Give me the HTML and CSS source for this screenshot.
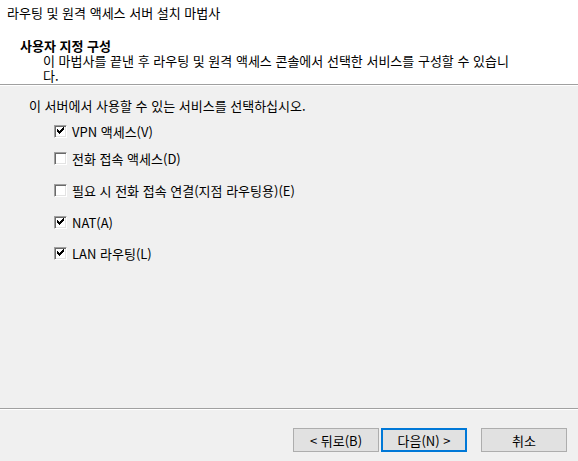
FILE: index.html
```html
<!DOCTYPE html>
<html lang="ko">
<head>
  <meta charset="UTF-8" />
  <title>라우팅 및 원격 액세스 서버 설치 마법사</title>
  <link rel="stylesheet" href="styles.css">
</head>
<body>

  <div class="header">
    <div class="title">라우팅 및 원격 액세스 서버 설치 마법사</div>
    <div class="heading">사용자 지정 구성</div>
    <div class="desc">이 마법사를 끝낸 후 라우팅 및 원격 액세스 콘솔에서 선택한 서비스를 구성할 수 있습니다.</div>
  </div>

  <div class="content">
    <p class="intro">이 서버에서 사용할 수 있는 서비스를 선택하십시오.</p>

    <div class="options">
      <label class="option"><span class="box checked"></span>VPN 액세스(V)</label>
      <label class="option"><span class="box"></span>전화 접속 액세스(D)</label>
      <label class="option"><span class="box"></span>필요 시 전화 접속 연결(지점 라우팅용)(E)</label>
      <label class="option"><span class="box checked"></span>NAT(A)</label>
      <label class="option"><span class="box checked"></span>LAN 라우팅(L)</label>
    </div>
  </div>

  <div class="footer">
    <button class="btn">&lt; 뒤로(B)</button>
    <button class="btn default">다음(N) &gt;</button>
    <button class="btn cancel">취소</button>
  </div>

</body>
</html>
```

FILE: styles.css
```css
html, body {
  height: 100%;
}

body {
  margin: 0;
  display: flex;
  flex-direction: column;
  background: #f0f0f0;
  color: #000;
  font-family: 'Noto Sans CJK KR', sans-serif;
  font-size: 13px;
  line-height: 15px;
}

.header {
  background: #fff;
  height: 85px;
  box-sizing: border-box;
  padding-top: 5px;
  border-bottom: 1px solid #a0a0a0;
}

.title {
  padding-left: 7px;
}

.heading {
  font-weight: 700;
  margin-top: 18px;
  padding-left: 20px;
}

.desc {
  padding-left: 43px;
  width: 476px;
}

.content {
  flex: 1;
  border-top: 1px solid #fff;
  padding: 12px 0 0 29px;
}

.intro {
  margin: 0;
}

.options {
  margin-top: 11px;
  padding-left: 25px;
}

.option {
  display: flex;
  align-items: center;
  height: 15px;
}

.option + .option {
  margin-top: 17px;
}

.option:nth-child(2) {
  margin-top: 12px;
}

.option:last-child {
  margin-top: 16px;
}

.box {
  width: 13px;
  height: 13px;
  box-sizing: border-box;
  margin-right: 5px;
  background: #fff;
  border: 1px solid;
  border-color: #a0a0a0 #fff #fff #a0a0a0;
  box-shadow: inset 1px 1px #696969, inset -1px -1px #e3e3e3;
  position: relative;
}

.box.checked::after {
  content: '';
  position: absolute;
  left: 2px;
  top: 1px;
  width: 7px;
  height: 7px;
  background: url("data:image/svg+xml,%3Csvg xmlns='http://www.w3.org/2000/svg' width='7' height='7' shape-rendering='crispEdges'%3E%3Cpath d='M6 0h1v3h-1zM5 1h1v3h-1zM4 2h1v3h-1zM3 3h1v3h-1zM2 4h1v3h-1zM1 3h1v3h-1zM0 2h1v3h-1z' fill='%23000'/%3E%3C/svg%3E") no-repeat;
}

.footer {
  display: flex;
  justify-content: flex-end;
  border-top: 1px solid #a0a0a0;
  box-shadow: inset 0 1px #fff;
  padding: 19px 11px 9px 0;
}

.btn {
  width: 86px;
  height: 24px;
  margin-left: 2px;
  padding: 0;
  box-sizing: border-box;
  background: #e1e1e1;
  border: 1px solid #adadad;
  font: inherit;
  color: #000;
}

.btn.default {
  border: 2px solid #0078d7;
}

.btn.cancel {
  margin-left: 14px;
}
```
